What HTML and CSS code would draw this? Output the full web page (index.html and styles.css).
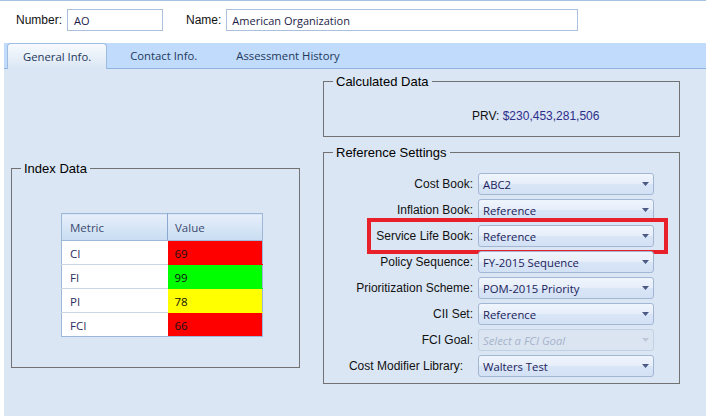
FILE: index.html
```html
<!DOCTYPE html>
<html>
<head>
<meta charset="utf-8">
<title>Organization</title>
<link rel="stylesheet" href="styles.css">
</head>
<body>
<div class="app">
  <header class="topbar">
    <span class="field-label">Number:</span>
    <div class="textbox tb-number">AO</div>
    <span class="field-label name-label">Name:</span>
    <div class="textbox tb-name">American Organization</div>
  </header>
  <nav class="tabs">
    <div class="tab active">General Info.</div>
    <div class="tab">Contact Info.</div>
    <div class="tab">Assessment History</div>
  </nav>
  <main class="content">
    <fieldset class="group index-group">
      <legend>Index Data</legend>
      <div class="index-inner">
        <table class="grid">
          <thead>
            <tr><th class="c-metric">Metric</th><th class="c-value">Value</th></tr>
          </thead>
          <tbody>
            <tr><td>CI</td><td class="v red light">69</td></tr>
            <tr><td>FI</td><td class="v green">99</td></tr>
            <tr><td>PI</td><td class="v yellow">78</td></tr>
            <tr><td>FCI</td><td class="v red">66</td></tr>
          </tbody>
        </table>
      </div>
    </fieldset>
    <div class="right-col">
      <fieldset class="group calc-group">
        <legend>Calculated Data</legend>
        <div class="calc-inner">PRV: <span class="money">$230,453,281,506</span></div>
      </fieldset>
      <fieldset class="group ref-group">
        <legend>Reference Settings</legend>
        <div class="ref-inner">
          <div class="row"><span class="row-label">Cost Book:</span><div class="combo">ABC2</div></div>
          <div class="row"><span class="row-label">Inflation Book:</span><div class="combo">Reference</div></div>
          <div class="row highlighted"><span class="row-label">Service Life Book:</span><div class="combo">Reference</div><span class="highlight"></span></div>
          <div class="row"><span class="row-label">Policy Sequence:</span><div class="combo">FY-2015 Sequence</div></div>
          <div class="row"><span class="row-label">Prioritization Scheme:</span><div class="combo">POM-2015 Priority</div></div>
          <div class="row"><span class="row-label">CII Set:</span><div class="combo">Reference</div></div>
          <div class="row"><span class="row-label">FCI Goal:</span><div class="combo disabled">Select a FCI Goal</div></div>
          <div class="row"><span class="row-label last-label">Cost Modifier Library:</span><div class="combo">Walters Test</div></div>
        </div>
      </fieldset>
    </div>
  </main>
</div>
</body>
</html>
```
FILE: styles.css
```css
* { box-sizing: border-box; }
html, body { margin: 0; padding: 0; }
body {
  width: 706px;
  height: 416px;
  overflow: hidden;
  background: #ffffff;
  font-family: "Liberation Sans", Arial, sans-serif;
  font-size: 12px;
  color: #111111;
}
.app { border-top: 1px solid #a6c2e2; }

.topbar {
  height: 42px;
  display: flex;
  align-items: flex-start;
  padding: 8px 0 0 16px;
}
.field-label { line-height: 22px; margin-right: 5px; color: #111; }
.name-label { margin-left: 23px; }
.textbox {
  height: 22px;
  border: 1px solid #abc0dc;
  background: #fff;
  font-family: "Open Sans", "Noto Sans", sans-serif;
  font-size: 11px;
  line-height: 21px;
  color: #1c1c48;
  padding-left: 6px;
}
.tb-number { width: 96px; }
.tb-name { width: 352px; padding-left: 5px; }

.tabs {
  margin-left: 4px;
  height: 26px;
  background: #c0dbfb;
  border-bottom: 1px solid #8fb4e2;
  display: flex;
  gap: 7px;
  padding-left: 3px;
}
.tab {
  height: 25px;
  padding: 0 16px;
  line-height: 26px;
  font-family: "Open Sans", "Noto Sans", sans-serif;
  font-size: 11.3px;
  color: #1e395b;
}
.tab.active {
  height: 26px;
  padding: 0 15px;
  line-height: 25px;
  background: linear-gradient(#f7fafe, #dae6f4);
  border: 1px solid #9fbbe0;
  border-bottom: none;
  border-radius: 4px 4px 0 0;
  position: relative;
  z-index: 1;
}

.content {
  margin-left: 4px;
  height: 347px;
  background: #dae6f4;
  display: flex;
  align-items: flex-start;
  padding-left: 7px;
  gap: 23px;
}

.group {
  margin: 0;
  padding: 0;
  min-width: 0;
  border: 1px solid #727272;
}
.group legend {
  padding: 0 3px;
  margin-left: 9px;
  font-size: 13px;
  line-height: 15px;
  color: #000;
}

.index-group { width: 289px; margin-top: 92px; }
.index-inner { padding: 37px 0 30px 49px; }

.grid {
  border-collapse: collapse;
  border: 1px solid #9db7d9;
  font-family: "Open Sans", "Noto Sans", sans-serif;
  font-size: 11.5px;
  background: #fff;
}
.grid th {
  height: 27px;
  text-align: left;
  font-weight: normal;
  color: #3c4b6e;
  padding: 1px 0 0 8px;
  background: linear-gradient(#e6effa, #c9dcf2);
  border-bottom: 1px solid #9db7d9;
}
.grid th.c-metric { width: 106px; border-right: 1px solid #8ca8d0; }
.grid th.c-value { width: 95px; padding-left: 7px; }
.grid td {
  height: 24px;
  padding: 1px 0 0 8px;
  color: #2e2e5e;
  border-bottom: 1px solid #c9d5e5;
}
.grid td.v { padding-left: 7px; color: #111; border-bottom-color: transparent; }
.grid tr:last-child td { border-bottom: none; }
.v.red { background: #ff0000; }
.v.green { background: #00ff00; }
.v.yellow { background: #ffff00; }
.v.light { color: #ffffff; }

.right-col {
  width: 357px;
  margin-top: 5px;
  display: flex;
  flex-direction: column;
  gap: 8px;
}
.calc-inner { padding: 20px 0 13px 148px; line-height: 14px; color: #111; }
.money { color: #2d2d8a; }

.ref-inner {
  padding: 13px 25px 6px 0;
  display: flex;
  flex-direction: column;
  gap: 4px;
}
.row {
  display: flex;
  align-items: center;
  height: 22px;
  position: relative;
}
.row-label {
  width: 149px;
  text-align: right;
  margin-right: 5px;
  color: #111;
  white-space: nowrap;
}
.last-label { padding-right: 10px; }
.combo {
  width: 176px;
  height: 22px;
  border: 1px solid #a3b7d5;
  border-radius: 3px;
  background: linear-gradient(#f0f5fd 0%, #e6eefa 50%, #d9e6f7 51%, #d3e1f5 100%);
  font-family: "Open Sans", "Noto Sans", sans-serif;
  font-size: 11.3px;
  line-height: 22px;
  color: #1c1c5a;
  padding-left: 4px;
  position: relative;
}
.combo::after {
  content: "";
  position: absolute;
  right: 4px;
  top: 8px;
  width: 7px;
  height: 4px;
  background: #4a5a84;
  clip-path: polygon(0 0, 100% 0, 50% 100%);
}
.combo.disabled {
  background: #dbe5f2;
  border-color: #c3d1e4;
  color: #a7b3ca;
  font-style: italic;
}
.combo.disabled::after { background: #bcc7d8; }

.highlight {
  position: absolute;
  left: 43px;
  top: -7px;
  width: 301px;
  height: 36px;
  border: 4px solid #e8202a;
  pointer-events: none;
}
```
